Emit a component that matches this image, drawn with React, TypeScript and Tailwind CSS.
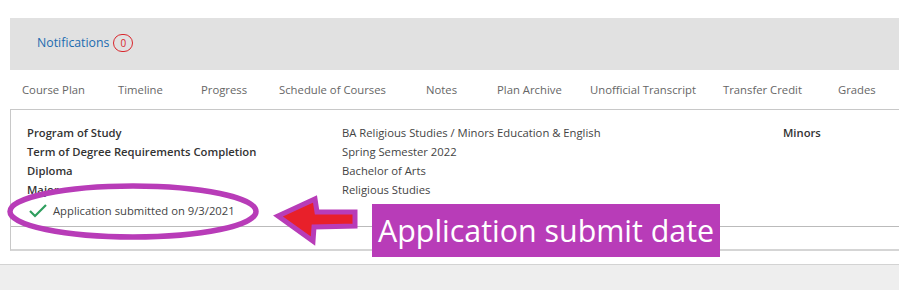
import React from "react";

const tabs = [
  { label: "Course Plan", w: "w-[96px]" },
  { label: "Timeline", w: "w-[83px]" },
  { label: "Progress", w: "w-[78px]" },
  { label: "Schedule of Courses", w: "w-[147px]" },
  { label: "Notes", w: "w-[71px]" },
  { label: "Plan Archive", w: "w-[93px]" },
  { label: "Unofficial Transcript", w: "w-[133px]" },
  { label: "Transfer Credit", w: "w-[115px]" },
  { label: "Grades", w: "w-[60px]" },
];

const rows = [
  ["Program of Study", "BA Religious Studies / Minors Education & English"],
  ["Term of Degree Requirements Completion", "Spring Semester 2022"],
  ["Diploma", "Bachelor of Arts"],
  ["Major", "Religious Studies"],
];

export default function App() {
  return (
    <div className="relative w-[899px] h-[290px] overflow-hidden bg-white font-['Open_Sans',sans-serif]">
      {/* Header band */}
      <div className="pt-[18px] pl-[10px]">
        <div className="h-[52px] bg-[#e1e1e1] flex items-center pl-[27px] pb-[2px]">
          <span className="text-[12.3px] text-[#1c6bb0]">Notifications</span>
          <span className="ml-[4px] w-[20px] h-[18px] rounded-full border border-[#d9262c] text-[#d9262c] text-[10px] flex items-center justify-center">
            0
          </span>
        </div>
      </div>

      {/* Tabs */}
      <div className="h-[39px] flex items-center pt-[2px] pl-[22px] text-[11.3px] text-[#666]">
        {tabs.map((t) => (
          <div key={t.label} className={`${t.w} shrink-0 whitespace-nowrap`}>
            {t.label}
          </div>
        ))}
      </div>

      {/* Details box */}
      <div className="ml-[10px] border-l border-t border-[#c8c8c8] border-b-2 border-b-[#d5d5d5] pt-[13px]">
        {rows.map(([k, v], i) => (
          <div key={k} className="flex pl-[16px] text-[11.25px] leading-[19px]">
            <div className="w-[315px] font-semibold text-[#333]">{k}</div>
            <div className="w-[441px] text-[#444]">{v}</div>
            <div className="font-semibold text-[#333]">{i === 0 ? "Minors" : ""}</div>
          </div>
        ))}
        <div className="mt-[2px] pb-[6px] border-b border-[#bbbbbb] flex items-center pl-[18px] text-[11.25px] leading-[19px] text-[#444]">
          <svg width="18" height="14" viewBox="0 0 18 14" className="mr-[6px]">
            <polyline points="1,7 6,12 17,1" fill="none" stroke="#2e9e5e" strokeWidth="2.2" />
          </svg>
          Application submitted on 9/3/2021
        </div>
        <div className="h-[22px]" />
      </div>

      {/* Footer */}
      <div className="mt-[13px] border-t border-[#d3d3d3] bg-[#eeeeee] h-[30px]" />

      {/* Annotation overlay */}
      <svg className="absolute left-0 top-0 pointer-events-none" width="899" height="290">
        <ellipse cx="133" cy="211.5" rx="123" ry="25.5" fill="none" stroke="#b83cb8" strokeWidth="5.5" />
        <polygon
          points="278,216 315,199 317,212 355,212 355,226 314,227 313,241"
          fill="#e8202a"
          stroke="#b83cb8"
          strokeWidth="5"
          strokeLinejoin="miter"
        />
      </svg>
      <div className="absolute left-[372px] top-[204px] w-[348px] h-[53px] bg-[#b83cb8] text-white text-[30.4px] leading-[53px] pl-[6px] whitespace-nowrap">
        Application submit date
      </div>
    </div>
  );
}
